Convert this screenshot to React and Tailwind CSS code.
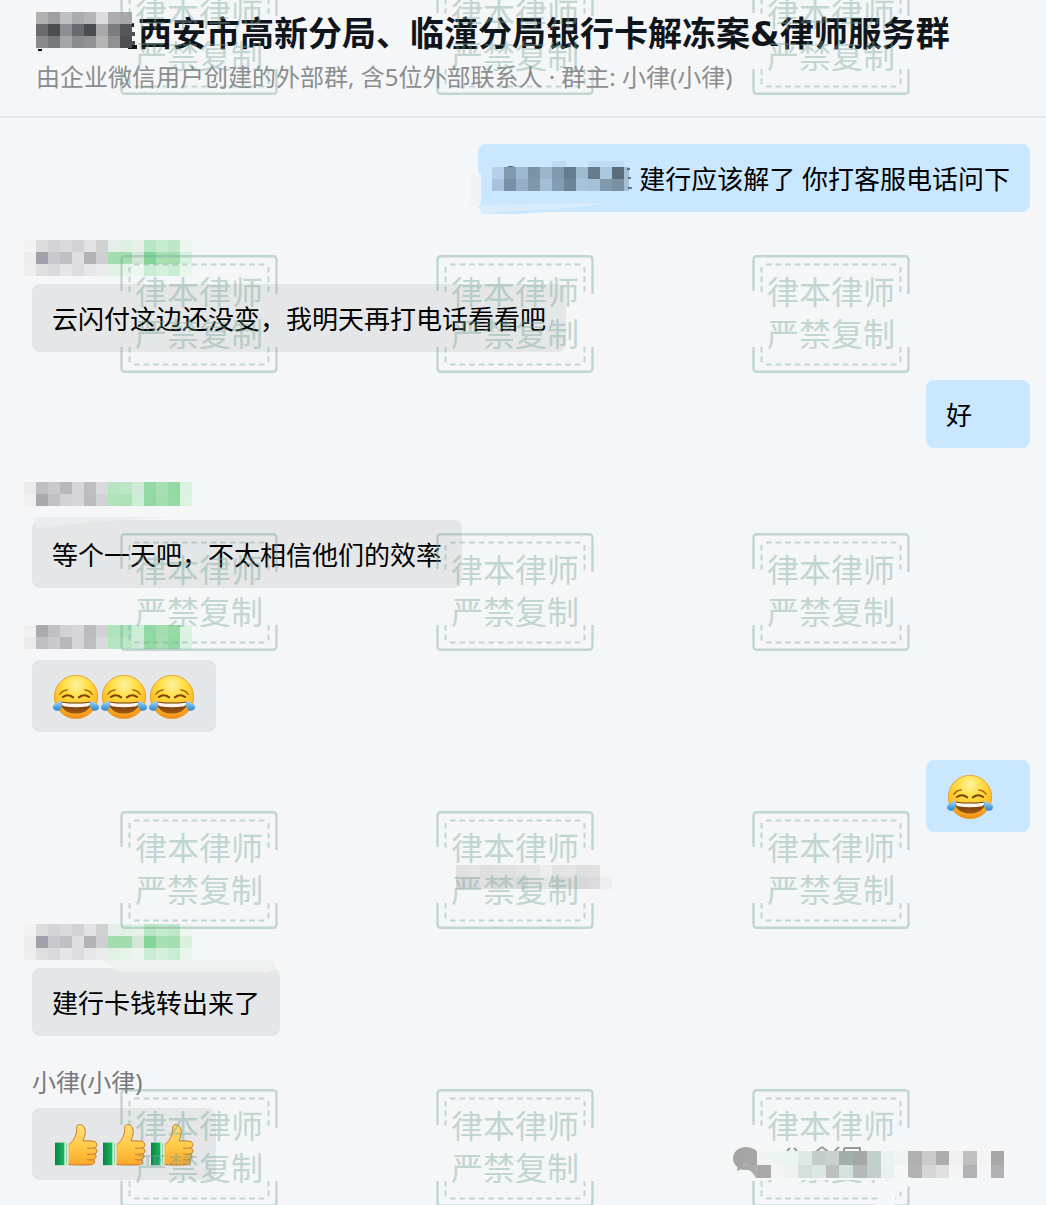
import React from 'react';

const NAME_TOP = ['#f3f3f3', '#dcdcde', '#d3d4d6', '#dadadc', '#d1d2d5', '#e3e3e5', '#d1d1d4', '#e4ede7', '#dcf1e2', '#e6f2e9', '#b8e6c4', '#c6eacf', '#bde7c8', '#edf7f0'];
const NAME_MID = ['#ededee', '#a1a1aa', '#c9c9cc', '#c0c0c4', '#dededf', '#b2b2b7', '#cfcfd2', '#a2ddb0', '#a2ddb0', '#d3e6d8', '#85d498', '#a8dfb5', '#a4dfb2', '#d9f2e0'];
const NAME_LOW = ['#eeeeef', '#dedfe1', '#d9dadc', '#e6e6e8', '#dcdddf', '#e7e7e9', '#eaebec', '#dff2e4', '#e5f3e9', '#edf5ef', '#c9edd2', '#d6f0dc', '#c9edd2', '#e9f6ec'];
const NAME_SOFT = ['#ebebec', '#bfbfc3', '#cacacd', '#b8b8bc', '#d6d6d8', '#bebec2', '#dadadc', '#b7e4c2', '#bce7c7', '#d0ead7', '#92d9a3', '#a7deb4', '#93d9a4', '#dbf2e1'];
const NAME_SOLID = ['#f0f0f1', '#a9a9b0', '#c1c1c5', '#d2d2d5', '#d7d7d9', '#bcbcc0', '#d2d2d5', '#b0e2bc', '#ade1ba', '#cdeed6', '#90d9a2', '#a3deb0', '#96daa6', '#dcf3e2'];

const TITLE_ROWS = [
  ['#b1b1b2', '#9f9fa1', '#bdc0c5', '#acacae', '#b5b5b7', '#dcdcde', '#adadaf', '#a7a7a9'],
  ['#6b6b6e', '#4c4d51', '#8b9097', '#68696c', '#4b4c50', '#a9a9ab', '#7c7d81', '#54565c'],
  ['#8a8a8c', '#78797c', '#a3a6aa', '#8c8c8e', '#919193', '#b4b4b5', '#909092', '#4e5056'],
];

const MENTION_ROWS = [
  ['#b5d0e8', '#8199ad', '#9db9cf', '#7c92a5', '#9bb5c9', '#829ab0', '#667c8f', '#9fbbd0', '#667b8c', '#a9c8e0', '#5b6d7b'],
  ['#a7c2d9', '#788fa4', '#96afc4', '#8097ab', '#a3bfd5', '#859db2', '#6e8497', '#a6c3da', '#a4c1d7', '#8199ad', '#7b91a3'],
];

const TIME_ROWS = [
  ['#e1e1e2', '#e4e4e5', '#dddedf', '#e1e1e2', '#e0e0e1', '#e4e4e5', '#e5e5e6', '#ecedee', '#e2e2e3', '#e4e4e5', '#dedfe0', '#e0e0e1'],
  ['#d7d9da', '#dadcdd', '#e1e1e2', '#d8dada', '#dededf', '#d6d8d9', '#e3e3e4', '#e5e5e6', '#d6d7d8', '#dcdcdd', '#d7d7d9', '#dbdbdd', '#edeeef'],
];

const FOOTER_ROWS = [
  ['#a6a6a5', '#f2f4f3', '#edf5f3', '#e8f5f2', '#dcebe6', '#c4cdca', '#cbd0ce', '#a1afaa', '#a3a7a6', '#c2cfcc', '#eaf1f0', '#f0f3f4', '#b0b0b0', '#cbcbcc', '#adadad', '#f0f0f1', '#bfc0bf', '#f3f4f5', '#a8a8a9'],
  ['#b1b1b1', '#a9a9a9', '#f3f4f4', '#edf1f0', '#d4e0dc', '#dce6e3', '#bcc0bf', '#d3e2dd', '#b4babb', '#c3cfcd', '#eaefef', '#f6f7f8', '#b2b2b3', '#d6d6d8', '#e0e0e1', '#f4f4f6', '#b2b2b5', '#f5f5f7', '#b1b1b4'],
];

function Mosaic({ rows, x = 0, y = 0, w = 12, h = 12 }) {
  return (
    <g shapeRendering="crispEdges">
      {rows.map((row, r) =>
        row.map((fill, c) => (
          <rect key={`${r}-${c}`} x={x + c * w} y={y + r * h} width={w} height={h} fill={fill} />
        ))
      )}
    </g>
  );
}

function HiddenName({ rows, y = 0, children }) {
  return (
    <svg width="168" height="36" className="relative z-10 -ml-2 block overflow-visible" aria-hidden="true">
      {children}
      <Mosaic rows={rows} y={y} />
    </svg>
  );
}

// Gradients shared by all emojis
function EmojiDefs() {
  return (
    <svg width="0" height="0" className="absolute" aria-hidden="true">
      <defs>
        <radialGradient id="face" cx="50%" cy="22%" r="80%">
          <stop offset="0" stopColor="#fff2a0" />
          <stop offset=".35" stopColor="#ffdf45" />
          <stop offset=".72" stopColor="#fdbd24" />
          <stop offset="1" stopColor="#ee8418" />
        </radialGradient>
        <linearGradient id="mouth" x1="0" y1="0" x2="0" y2="1">
          <stop offset="0" stopColor="#5d2d08" />
          <stop offset="1" stopColor="#a25a14" />
        </linearGradient>
        <linearGradient id="tear" x1="0" y1="0" x2="0" y2="1">
          <stop offset="0" stopColor="#a8dcf8" />
          <stop offset="1" stopColor="#2484d0" />
        </linearGradient>
        <linearGradient id="hand" x1="0" y1="0" x2="0" y2="1">
          <stop offset="0" stopColor="#ffe27a" />
          <stop offset=".5" stopColor="#ffcb4a" />
          <stop offset="1" stopColor="#fba928" />
        </linearGradient>
        <linearGradient id="cuff" x1="0" y1="0" x2="1" y2="0">
          <stop offset="0" stopColor="#05863f" />
          <stop offset="1" stopColor="#1cb868" />
        </linearGradient>
      </defs>
    </svg>
  );
}

function Joy() {
  return (
    <svg viewBox="0 0 48 48" className="size-12 shrink-0" role="img" aria-label="笑哭">
      <circle cx="24" cy="24" r="21.6" fill="url(#face)" stroke="#ec9a2c" strokeWidth=".9" />
      <g fill="none" stroke="#7d4306" strokeLinecap="round">
        <path d="M7.800 21.400C9.600 18.600 12.200 17.200 15.200 17M40.200 21.400C38.400 18.600 35.800 17.200 32.800 17" strokeWidth="1.3" stroke="#a8620e" />
        <path d="M10.800 24C13.800 21.800 18 21.800 21.200 24.400M26.800 24.400C30 21.800 34.200 21.800 37.200 24" strokeWidth="2" />
      </g>
      <path d="M8.500 28.400C18 30 30 30 39.500 28.400C39.500 35.600 32.600 40.600 24 40.600S8.500 35.600 8.500 28.400Z" fill="url(#mouth)" />
      <path d="M9.400 29.400C19 31 29 31 38.600 29.400C38 31.600 37.400 32.600 36.400 33.200C28 34.600 20 34.600 11.600 33.200C10.600 32.600 10 31.600 9.400 29.400Z" fill="#fff6ea" />
      <path d="M9.300 27.600C10.200 31 10.200 34 8.400 36.200C6.400 38.400 2.800 38.200 1.400 35.800C-.2 32.800 2.400 31.200 9.300 27.600Z" fill="url(#tear)" />
      <path d="M38.700 27.600C37.800 31 37.800 34 39.600 36.200C41.600 38.400 45.200 38.200 46.600 35.800C48.200 32.800 45.600 31.200 38.700 27.600Z" fill="url(#tear)" />
    </svg>
  );
}

function ThumbsUp() {
  return (
    <svg viewBox="0 0 48 48" className="size-12 shrink-0" role="img" aria-label="赞">
      <path
        d="M16 24C20 22.200 22.400 17.600 24.200 13C25 10.800 24.400 8 24.800 5.800C25.300 3.200 29 2.700 31.200 5C34.400 8.300 33.400 14.400 31 19.600C34.600 20.100 39 19.600 42.200 20.400C45.600 21.400 45.700 25.600 43.200 26.800C45.800 28.200 45.400 32 42.800 33C44.800 34.400 44.200 37.800 41.600 38.600C43.400 40.200 42.600 43.400 39.400 43.700C32 44.300 23 44 16 43.600Z"
        fill="url(#hand)"
        stroke="#c4772a"
        strokeWidth="1"
      />
      <path d="M43.200 26.800C41 27.400 38 27.500 35.400 27.200M42.800 33C40.600 33.500 38 33.500 35.600 33.200M41.600 38.600C39.600 39.100 37.600 39 35.400 38.800" fill="none" stroke="#c4772a" strokeWidth="1" strokeLinecap="round" />
      <rect x="3" y="21.600" width="10.500" height="22.600" fill="url(#cuff)" />
      <rect x="12.400" y="21.600" width="4.200" height="22.600" fill="#e3f5e8" />
      <path d="M14.600 22V44" stroke="#6cc496" strokeWidth=".8" />
    </svg>
  );
}

function Stamp() {
  return (
    <svg width="158" height="118" viewBox="0 0 158 118" className="block opacity-40">
      <g fill="none" stroke="#76a598" strokeWidth="2.4">
        <path d="M1.500 36V5Q1.500 1.200 5 1.200H153Q156.500 1.200 156.500 5V39" />
        <path d="M1.500 92V113Q1.500 116.800 5 116.800H153Q156.500 116.800 156.500 113V92" />
        <path d="M14 9.500H146M14 109.500H146" strokeWidth="2" strokeDasharray="5.6 4" />
        <path d="M9.500 12V38M148.500 12V38M9.500 92V108M148.500 92V108" strokeWidth="2" strokeDasharray="5.6 4" />
      </g>
      <g fill="#76a598" fontSize="32" fontFamily="'Noto Sans CJK SC', sans-serif">
        <text x="15" y="49">律本律师</text>
        <text x="15" y="91">严禁复制</text>
      </g>
    </svg>
  );
}

function Watermark() {
  return (
    <div className="pointer-events-none absolute -top-[23px] left-[120px] z-20 grid grid-cols-[repeat(3,158px)] gap-x-[158px] gap-y-[160px]">
      {Array.from({ length: 15 }, (_, i) => (
        <Stamp key={i} />
      ))}
    </div>
  );
}

function FooterMark() {
  return (
    <svg width="282" height="58" className="pointer-events-none absolute top-[1147px] left-[733px] z-20 overflow-visible" aria-hidden="true">
      <path d="M24 4H279V17L262 33H24Z" fill="#f4f8f8" />
      <path d="M13 0C5.500 0 0 5 0 11.500C0 15 1.600 18 4.500 20L4 24L9 21.800C11 22.500 13 23 15 23L27 9C25 3.500 19.500 0 13 0Z" fill="#a3a5a4" />
      <path d="M57 1L54 4M61 1L64 4M89 0L80 7M89 0L98 7M106 0L101 5M111 1H127V9M111 1V8" fill="none" stroke="#929a97" strokeWidth="2" />
      <Mosaic rows={FOOTER_ROWS} x={10} y={4} w={13.75} h={13.5} />
      <path d="M9 23L10 17.500H14L23 31H10Z" fill="#f4f8f8" />
      <path d="M9 17.500H20L24 29L16 23H9Z" fill="#a9a9a9" />
      <path d="M152 34L178 30V38L162 48V58H142Z" fill="#f4f8f9" />
    </svg>
  );
}

function Message({ own = false, name, children }) {
  return (
    <li className={own ? 'flex flex-col items-end' : 'flex flex-col items-start'}>
      {name && <div className="mb-2 h-9 text-[24px] leading-9 text-[#77797c]">{name}</div>}
      <div
        className={[
          'flex items-center rounded-lg px-5 pt-[17px] pb-[15px] text-[26px] leading-9 text-black',
          own ? 'min-w-[104px] bg-[#c9e7ff]' : 'bg-[#e4e6e7]',
        ].join(' ')}
      >
        {children}
      </div>
    </li>
  );
}

const Emojis = ({ children }) => <div className="-my-1 flex">{children}</div>;

export default function App() {
  return (
    <div className="relative min-h-screen overflow-hidden bg-[#f5f6f8] font-['Noto_Sans','Noto_Sans_CJK_SC',sans-serif]">
      <EmojiDefs />

      <header className="h-[118px] border-b-2 border-[#e6e7e9] pt-3 pl-9">
        <h1 className="flex items-center font-['DejaVu_Sans','Noto_Sans_CJK_SC',sans-serif] text-[34px] leading-[44px] font-bold whitespace-nowrap text-[#10151b]">
          <svg width="102" height="44" className="shrink-0 overflow-visible" aria-hidden="true">
            <path d="M84 11H98V15H94V20H99V24H95V29H99V34H84Z" fill="#4b4d52" />
            <path d="M93 12H98V15H93ZM92 33H101V37H92Z" fill="#10151b" />
            <Mosaic rows={TITLE_ROWS} />
            <path d="M2 37H6V39H2Z" fill="#10151b" />
          </svg>
          西安市高新分局、临潼分局银行卡解冻案&律师服务群
        </h1>
        <p className="mt-[3px] text-[24px] leading-9 whitespace-nowrap text-[#8b8d8f]">
          由企业微信用户创建的外部群, 含5位外部联系人 · 群主: 小律(小律)
        </p>
      </header>

      <main>
        <ul className="flex flex-col gap-7 px-4 pt-[26px] pb-6 [&>li]:pl-4">
          <Message own>
            <svg width="141" height="36" className="shrink-0 overflow-visible" aria-hidden="true">
              <path d="M-28 12H-17V45H-28Z" fill="#eff4f9" />
              <path d="M-18 42L-8 51L62 50L22 53H-16Z" fill="#c9e7ff" />
              <path d="M-18 44L112 42L72 47L14 50L-16 53Z" fill="#d9ecfb" />
              <path d="M54 0H68V8H54ZM90 0H126V8H90Z" fill="#bedcf4" />
              <path d="M5 11C7 6 14 5 18 8" fill="none" stroke="#111" strokeWidth="2" />
              <Mosaic rows={MENTION_ROWS} x={-6} y={6} />
              <path d="M126 6H131V30H126Z" fill="#a4bfd4" />
              <path d="M129 8H132M130 17H133M130 27H134" stroke="#111" strokeWidth="1" />
            </svg>
            建行应该解了 你打客服电话问下
          </Message>

          <Message name={<HiddenName rows={[NAME_TOP, NAME_MID, NAME_LOW]} />}>云闪付这边还没变，我明天再打电话看看吧</Message>

          <Message own>好</Message>

          <Message
            name={
              <HiddenName rows={[NAME_SOFT, NAME_SOLID]} y={6}>
                <path d="M12 41H150L70 46L12 52Z" fill="#ebecee" />
              </HiddenName>
            }
          >
            等个一天吧，不太相信他们的效率
          </Message>

          <Message name={<HiddenName rows={[NAME_SOLID, NAME_SOFT]} y={9} />}>
            <Emojis>
              <Joy />
              <Joy />
              <Joy />
            </Emojis>
          </Message>

          <Message own>
            <Emojis>
              <Joy />
            </Emojis>
          </Message>

          <li className="flex justify-center">
            <svg width="154" height="36" className="block overflow-visible" aria-hidden="true">
              <Mosaic rows={TIME_ROWS} x={2} y={5} />
            </svg>
          </li>

          <Message
            name={
              <HiddenName rows={[NAME_TOP, NAME_MID, NAME_LOW]}>
                <path d="M78 36H248L253 44L244 48H96Z" fill="#eff0f0" />
              </HiddenName>
            }
          >
            建行卡钱转出来了
          </Message>

          <Message name="小律(小律)">
            <Emojis>
              <ThumbsUp />
              <ThumbsUp />
              <ThumbsUp />
            </Emojis>
          </Message>
        </ul>
      </main>

      <Watermark />
      <FooterMark />
    </div>
  );
}
